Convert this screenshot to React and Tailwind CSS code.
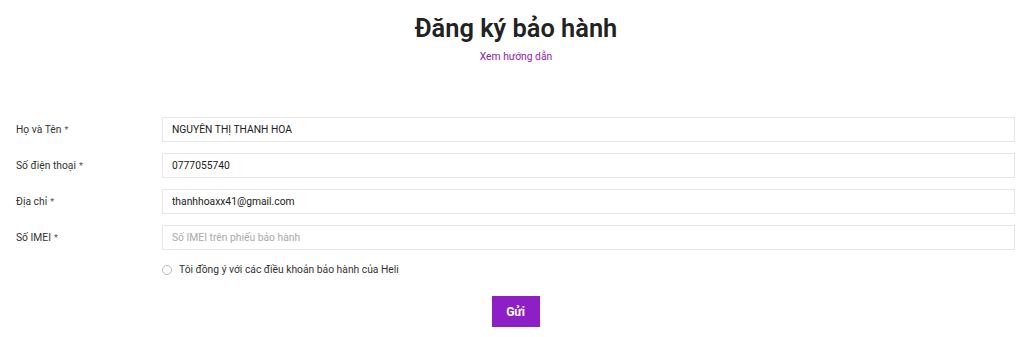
import React, { useState } from 'react';

const fields = [
  { label: 'Họ và Tên', value: 'NGUYỄN THỊ THANH HOA' },
  { label: 'Số điện thoại', value: '0777055740' },
  { label: 'Địa chỉ', value: 'thanhhoaxx41@gmail.com' },
  { label: 'Số IMEI', value: '', placeholder: 'Số IMEI trên phiếu bảo hành' },
];

export default function App() {
  const [values, setValues] = useState(fields.map(f => f.value));
  const [agree, setAgree] = useState(false);

  return (
    <div className="min-h-[337px] bg-white font-['Roboto',sans-serif] text-[#333]">
      <div className="pt-[11px] pl-[8px] text-center">
        <h1 className="text-[25.4px] font-semibold leading-[34px] text-[#222]">Đăng ký bảo hành</h1>
        <a href="#" className="mt-[5px] block text-[10.3px] leading-[14px] text-[#8e24aa]">Xem hướng dẫn</a>
      </div>

      <form className="mt-[53px] pl-[16px] pr-[9px]" onSubmit={e => e.preventDefault()}>
        <div className="flex flex-col gap-[11px]">
          {fields.map((f, i) => (
            <div key={f.label} className="flex items-center">
              <label className="w-[146px] shrink-0 text-[10.3px] text-[#333]">
                {f.label}<span className="ml-[3px] text-[9px] text-[#555]">*</span>
              </label>
              <input
                className="h-[25px] flex-1 border border-[#e6e6e6] bg-white px-[9px] text-[10.3px] text-[#222] outline-none placeholder:text-[#aaa]"
                value={values[i]}
                placeholder={f.placeholder}
                onChange={e => {
                  const next = [...values];
                  next[i] = e.target.value;
                  setValues(next);
                }}
              />
            </div>
          ))}
        </div>

        <label className="mt-[12px] ml-[146px] flex items-center gap-[7px] text-[10.3px] text-[#333]">
          <span
            onClick={() => setAgree(!agree)}
            className="flex h-[10px] w-[10px] items-center justify-center rounded-full border border-[#bbb]"
          >
            {agree && <span className="h-[4px] w-[4px] rounded-full bg-[#8e24aa]" />}
          </span>
          Tôi đồng ý với các điều khoản bảo hành của Heli
        </label>

        <div className="mt-[19px] flex justify-center">
          <button className="h-[31px] w-[48px] bg-[#8e1fc6] text-[12px] font-bold text-white">Gửi</button>
        </div>
      </form>
    </div>
  );
}
